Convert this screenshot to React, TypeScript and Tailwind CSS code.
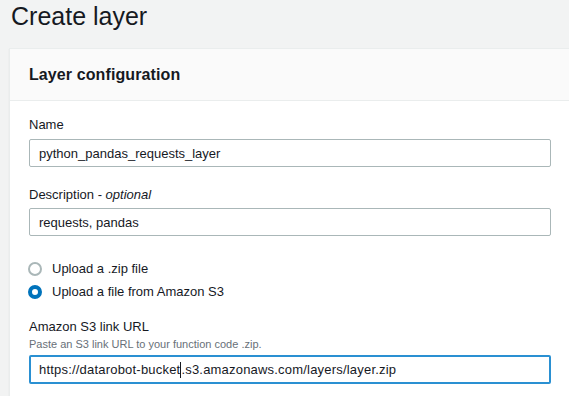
export default function App() {
  return (
    <div
      className="w-[569px] h-[396px] overflow-hidden bg-[#f2f3f3] text-[#16191f]"
      style={{ fontFamily: '"Liberation Sans", Arial, sans-serif' }}
    >
      <h1 className="pl-[11px] h-[48px] pt-[2px] text-[25px] leading-[28px]">
        Create layer
      </h1>

      <div className="ml-[9px] bg-white border-l border-[#eaeded] shadow-[0_1px_1px_rgba(0,28,36,0.1)]">
        <div className="h-[53px] bg-[#fafafa] border-b border-t border-[#eaeded] flex items-center pl-[19px]">
          <h2 className="text-[16px] font-bold pt-[1px] tracking-[0.1px]">Layer configuration</h2>
        </div>

        <div className="pl-[19px] pr-[18px] pt-[14px] pb-6 text-[13px]">
          <label className="block leading-[20px] mb-[4px]">Name</label>
          <input
            readOnly
            value="python_pandas_requests_layer"
            className="w-[522px] h-[28px] border border-[#aab7b8] rounded-[2px] px-[9px] text-[13px] outline-none"
          />

          <label className="block leading-[20px] mt-[18px] mb-[3px]">
            Description - <i>optional</i>
          </label>
          <input
            readOnly
            value="requests, pandas"
            className="w-[522px] h-[28px] border border-[#aab7b8] rounded-[2px] px-[9px] text-[13px] outline-none"
          />

          <div className="mt-[25px] flex flex-col gap-[7px]">
            <div className="flex items-center gap-[10px] h-[16px]">
              <span className="w-[14px] h-[14px] ml-[-1px] rounded-full border-2 border-[#aab7b8] bg-white" />
              <span>Upload a .zip file</span>
            </div>
            <div className="flex items-center gap-[10px] h-[16px]">
              <span className="w-[14px] h-[14px] ml-[-1px] rounded-full border-[4px] border-[#0073bb] bg-white" />
              <span>Upload a file from Amazon S3</span>
            </div>
          </div>

          <label className="block leading-[20px] mt-[17px]">Amazon S3 link URL</label>
          <p className="text-[11px] leading-[14px] text-[#687078] mb-[4px]">
            Paste an S3 link URL to your function code .zip.
          </p>
          <div className="w-[522px] h-[29px] border-2 border-[#2a90d2] rounded-[2px] px-[8px] flex items-center tracking-[0.2px]">
            <span>https://datarobot-bucket</span>
            <span className="w-px h-[16px] bg-[#16191f]" />
            <span>.s3.amazonaws.com/layers/layer.zip</span>
          </div>
        </div>
      </div>
    </div>
  )
}
